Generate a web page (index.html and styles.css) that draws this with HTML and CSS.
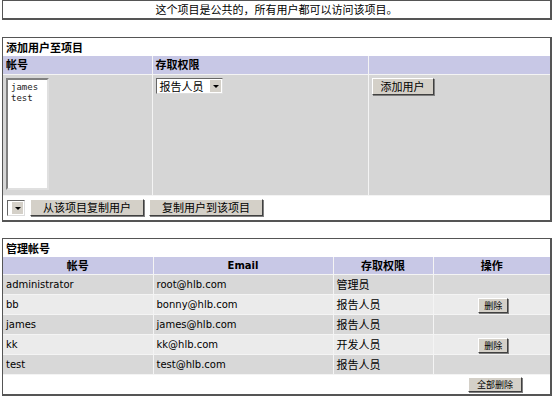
FILE: index.html
```html
<!DOCTYPE html>
<html lang="zh-CN">
<head>
	<meta charset="UTF-8">
	<title>项目用户</title>
	<link rel="stylesheet" href="styles.css">
</head>
<body>
	<div class="notice">这个项目是公共的，所有用户都可以访问该项目。</div>

	<div class="box box-add">
		<div class="title">添加用户至项目</div>
		<table class="grid add">
			<tr class="head">
				<th class="c1">帐号</th>
				<th class="c2">存取权限</th>
				<th class="c3"></th>
			</tr>
			<tr class="body">
				<td>
					<div class="listbox">james<br>test</div>
				</td>
				<td>
					<div class="select">报告人员<span class="arrow"></span></div>
				</td>
				<td>
					<span class="btn">添加用户</span>
				</td>
			</tr>
		</table>
		<div class="copy">
			<div class="select mini"><span class="arrow"></span></div>
			<span class="btn wide">从该项目复制用户</span>
			<span class="btn wide">复制用户到该项目</span>
		</div>
	</div>

	<div class="box box-manage">
		<div class="title">管理帐号</div>
		<table class="grid users">
			<tr class="head">
				<th class="u1">帐号</th>
				<th class="u2 latin">Email</th>
				<th class="u3">存取权限</th>
				<th class="u4">操作</th>
			</tr>
			<tr class="dark">
				<td class="latin">administrator</td>
				<td class="latin">root@hlb.com</td>
				<td>管理员</td>
				<td></td>
			</tr>
			<tr class="light">
				<td class="latin">bb</td>
				<td class="latin">bonny@hlb.com</td>
				<td>报告人员</td>
				<td class="op"><span class="btn small">删除</span></td>
			</tr>
			<tr class="dark">
				<td class="latin">james</td>
				<td class="latin">james@hlb.com</td>
				<td>报告人员</td>
				<td></td>
			</tr>
			<tr class="light">
				<td class="latin">kk</td>
				<td class="latin">kk@hlb.com</td>
				<td>开发人员</td>
				<td class="op"><span class="btn small">删除</span></td>
			</tr>
			<tr class="dark">
				<td class="latin">test</td>
				<td class="latin">test@hlb.com</td>
				<td>报告人员</td>
				<td></td>
			</tr>
		</table>
		<div class="foot"><span class="btn small">全部删除</span></div>
	</div>
</body>
</html>
```

FILE: styles.css
```css
*{
	margin: 0;
	padding: 0;
	box-sizing: border-box;
}
body{
	width: 554px;
	padding: 0 2px;
	font-family: "Noto Sans CJK SC", "DejaVu Sans", sans-serif;
	font-size: 11px;
	color: #000;
	background: #fff;
}
.notice{
	height: 20px;
	line-height: 17px;
	text-align: center;
	border: 1px solid #555;
	border-bottom-width: 2px;
	border-right-width: 2px;
}
.box{
	margin-top: 16px;
	border: 1px solid #555;
	border-bottom-width: 2px;
	border-right-width: 2px;
}
.box-add{
	margin-top: 17px;
}
.title{
	height: 18px;
	line-height: 18px;
	padding-left: 3px;
	font-weight: bold;
}
.grid{
	width: 100%;
	border-collapse: collapse;
	table-layout: fixed;
}
.grid th,.grid td{
	border-right: 1px solid #f4f4f4;
	border-bottom: 1px solid #f4f4f4;
	vertical-align: top;
}
.grid th:last-child,.grid td:last-child{
	border-right: 0;
}
.head th{
	height: 18px;
	line-height: 17px;
	background: #c8c8e6;
	font-weight: bold;
}
.add .head th{
	text-align: left;
	padding-left: 3px;
}
.c1{ width: 149px; }
.c2{ width: 216px; }
.body td{
	height: 121px;
	background: #d6d6d6;
	padding: 3px 2px 0 3px;
}
.listbox{
	width: 43px;
	height: 112px;
	padding: 2px 0 0 3px;
	background: #fff;
	border: 2px solid #808080;
	border-right-color: #e0e0e0;
	border-bottom-color: #e0e0e0;
	font-family: "DejaVu Sans Mono", monospace;
	font-size: 9px;
	line-height: 11px;
	color: #222;
}
.select{
	position: relative;
	width: 67px;
	height: 16px;
	line-height: 14px;
	padding-left: 3px;
	background: #fff;
	border: 1px solid #666;
	border-right-color: #ddd;
	border-bottom-color: #ddd;
	font-size: 11px;
}
.arrow{
	position: absolute;
	right: 1px;
	top: 1px;
	width: 11px;
	height: 12px;
	background: #d4d0c8;
}
.arrow:after{
	content: "";
	position: absolute;
	left: 3px;
	top: 5px;
	border-left: 3px solid transparent;
	border-right: 3px solid transparent;
	border-top: 3px solid #000;
}
.select.mini{
	width: 18px;
	padding: 0;
}
.btn{
	display: inline-block;
	height: 17px;
	line-height: 15px;
	padding: 0 8px;
	background: #d4d0c8;
	border: 1px solid #fff;
	border-right-color: #404040;
	border-bottom-color: #404040;
	box-shadow: 1px 1px 0 #808080;
	font-size: 11px;
	text-align: center;
}
.btn.wide{
	width: 114px;
}
.copy{
	height: 24px;
	display: flex;
	align-items: center;
	gap: 5px;
	padding-left: 4px;
	background: #fff;
}
.latin{
	font-family: "DejaVu Sans", sans-serif;
	font-size: 10px;
}
.users .head th{
	text-align: center;
}
.u1{ width: 150px; }
.u2{ width: 180px; }
.u3{ width: 100px; }
.users td{
	height: 20px;
	line-height: 19px;
	padding-left: 3px;
	vertical-align: middle;
}
.dark td{
	background: #d8d8d8;
}
.light td{
	background: #ebebeb;
}
.op{
	text-align: center;
}
.btn.small{
	height: 15px;
	line-height: 13px;
	padding: 0 5px;
	font-size: 9px;
}
.foot{
	height: 19px;
	display: flex;
	align-items: center;
	padding-left: 465px;
}
.foot .btn{
	padding: 0 8px;
}
```
